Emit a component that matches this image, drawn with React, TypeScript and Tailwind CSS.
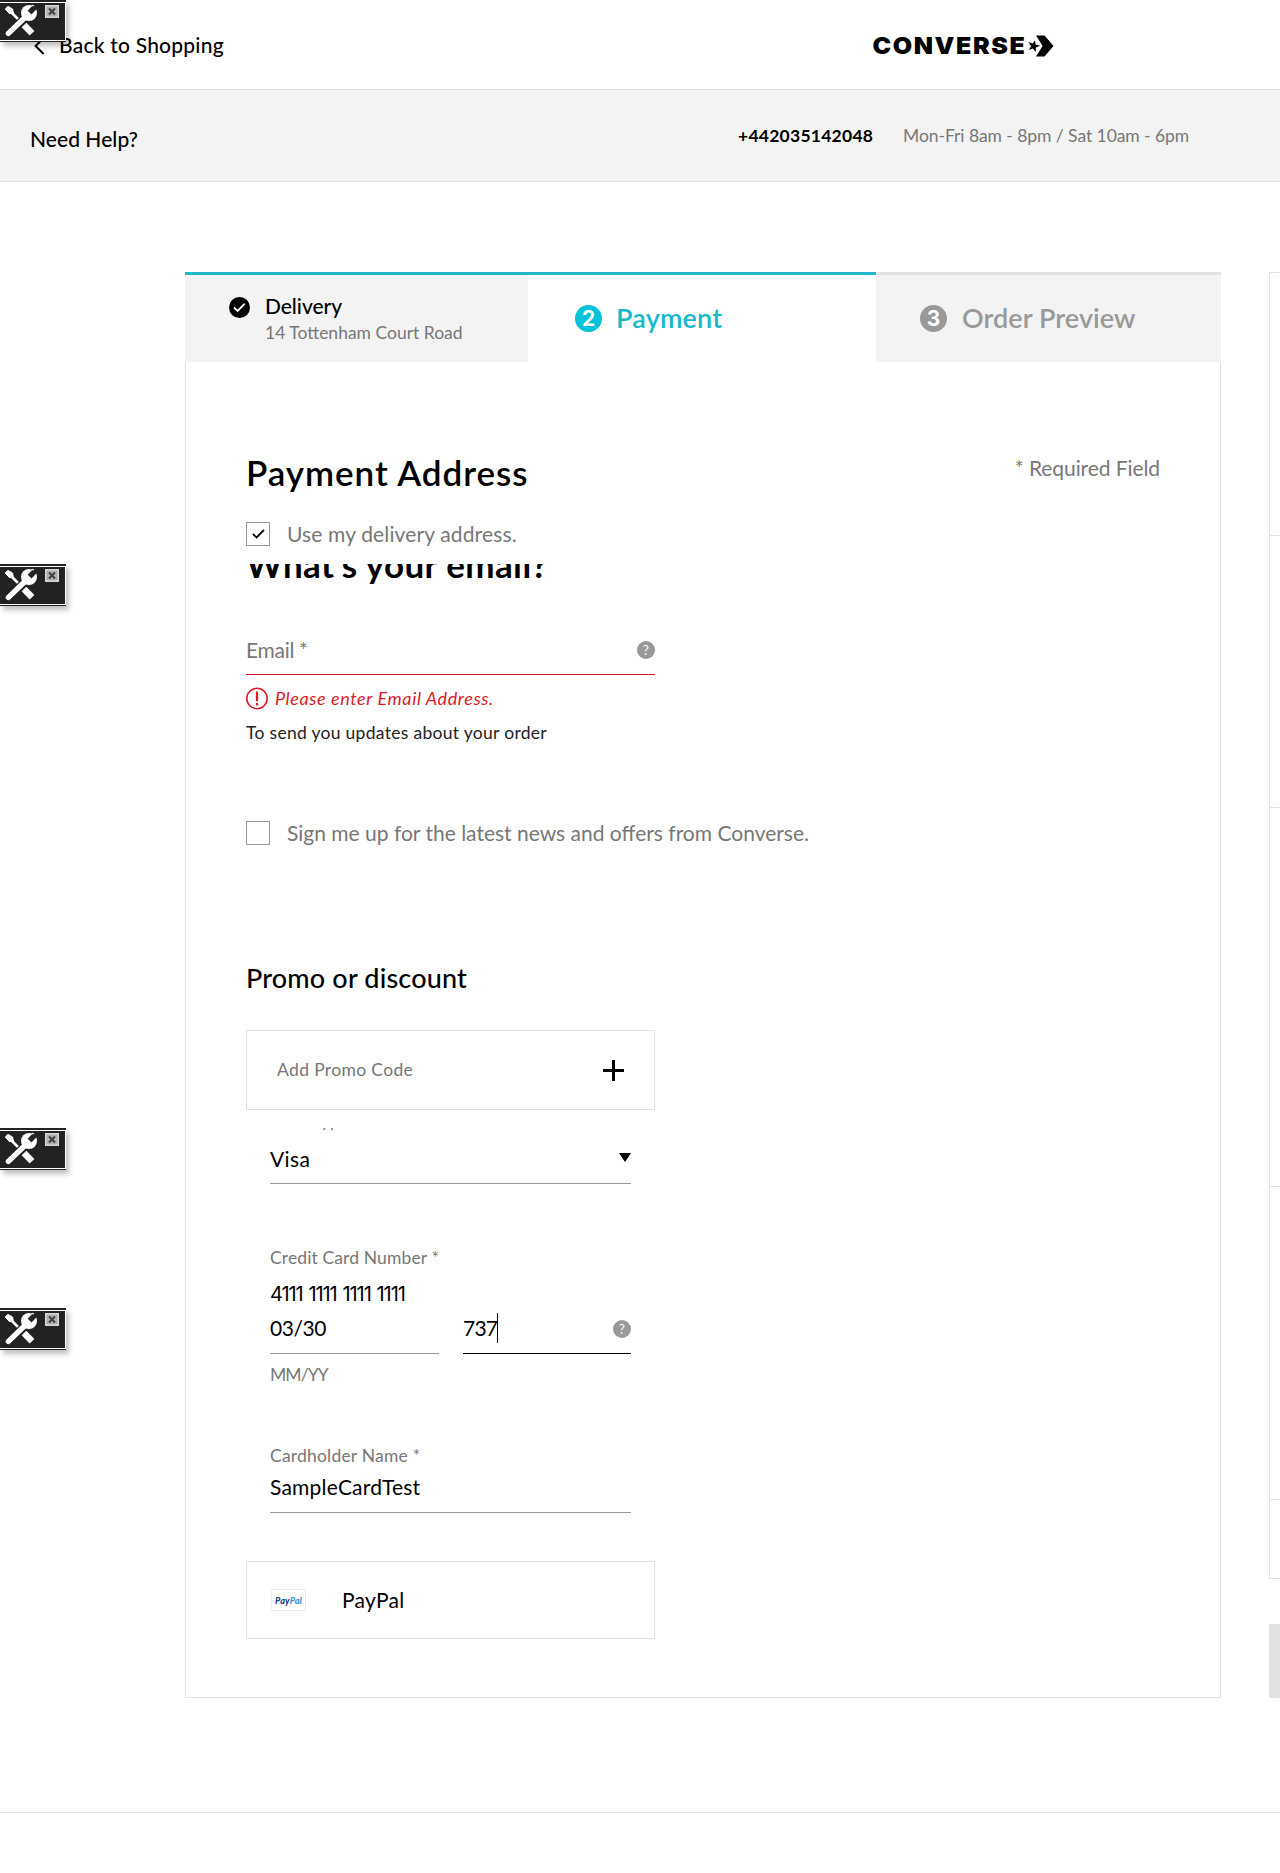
import React from "react";

function ToolBadge({ place }: { place: string }) {
  return (
    <div className={`absolute left-0 z-10 flex h-[42px] w-[66px] flex-col bg-white shadow-[3px_4px_5px_rgba(0,0,0,0.25)] ${place}`}>
      <div className="h-[2px] bg-[#222]" />
      <div className="mt-px mb-px mr-px flex-1 bg-[#222]">
        <svg width="65" height="37" viewBox="0 3 65 37" fill="none">
          <path d="M11 12 L23 24" stroke="#fff" strokeWidth="2.6" />
          <path d="M5.2 9 L8 6.4 L12.6 9 L13.4 13.4 L9.4 13.6 Z" fill="#fff" stroke="#fff" strokeLinejoin="round" />
          <path d="M24 25 L32 33.2" stroke="#fff" strokeWidth="6.6" />
          <path d="M26 16.5 L8.6 33.4" stroke="#222" strokeWidth="8" />
          <path d="M26.5 16 L8.4 33.4" stroke="#fff" strokeWidth="5.4" strokeLinecap="round" />
          <circle cx="29" cy="13" r="8" fill="#fff" />
          <path d="M29.6 12.6 L38.5 3.2" stroke="#222" strokeWidth="5.2" />
          <path d="M31.8 5.2 L34 6" stroke="#fff" strokeWidth="1.2" />
          <rect x="45" y="5" width="14" height="13" fill="#d6d6d6" />
          <rect x="47" y="7" width="10" height="9" fill="#b8b8b8" stroke="#999" strokeWidth="0.6" />
          <path d="M49 8.5 L55 14.5 M55 8.5 L49 14.5" stroke="#444" strokeWidth="2.2" />
        </svg>
      </div>
      <div className="h-px bg-[#222]" />
    </div>
  );
}

function Help() {
  return (
    <span className="flex h-[18px] w-[18px] items-center justify-center rounded-full bg-[#999] text-[13px] leading-none text-white">?</span>
  );
}

function Logo() {
  return (
    <svg width="182" height="36" viewBox="0 -6 182 36" className="block overflow-visible">
      <g transform="scale(1.06 1)">
        <text x="-0.4" y="19" textLength="143.6" lengthAdjust="spacing" fontFamily="Inter, sans-serif" fontWeight="900" fontSize="23.6">
          CONVERSE
        </text>
      </g>
      <path d="M163 0.5 H171.5 L180.5 11 L171.5 21.5 H163 L169.6 11 Z" />
      <path d="M155.5 7 L159.7 8.6 L162 5.2 L162.6 9.4 L167.2 10.8 L163 12.6 L162.6 17 L159.8 13.6 L156 15 L158 11.2 Z" />
    </svg>
  );
}

function StepNumber({ n, tone }: { n: string; tone: string }) {
  return (
    <span className={`flex h-[27px] w-[27px] items-center justify-center rounded-full font-['Inter'] text-[21px] leading-none font-bold text-white ${tone}`}>{n}</span>
  );
}

export default function App() {
  return (
    <div className="relative h-[1873px] w-[1280px] overflow-hidden bg-white font-['Lato',sans-serif] text-[21px] leading-6 text-black">
      <ToolBadge place="top-0" />
      <ToolBadge place="top-[564px]" />
      <ToolBadge place="top-[1128px]" />
      <ToolBadge place="top-[1308px]" />

      <header className="flex h-[90px] items-start border-b border-[#dedede]">
        <div className="mt-[33px] flex w-[873px] items-center pl-[34px]">
          <svg width="12" height="20" viewBox="0 0 12 20" fill="none" stroke="#000" strokeWidth="2" className="mr-[13px]">
            <path d="M9.6 3 L1.6 11 L9.6 19" />
          </svg>
          <span className="font-medium tracking-[0.22px] whitespace-nowrap">Back to Shopping</span>
        </div>
        <div className="mt-[29px]">
          <Logo />
        </div>
      </header>

      <section className="flex h-[92px] items-start border-b border-[#dedede] bg-[#f3f3f3]">
        <h2 className="mt-[37px] w-[738px] pl-[30px] font-medium tracking-[0.05px]">Need Help?</h2>
        <div className="mt-[36px] flex text-[17.5px] leading-5 whitespace-nowrap">
          <span className="w-[165px] font-bold tracking-[0.25px]">+442035142048</span>
          <span className="tracking-[-0.06px] text-[#777]">Mon-Fri 8am - 8pm / Sat 10am - 6pm</span>
        </div>
      </section>

      <div className="mt-[90px] flex items-start">
        <main className="ml-[185px] flex h-[1426px] w-[1036px] shrink-0 flex-col">
          <nav className="flex h-[90px] shrink-0">
            <div className="flex w-[343px] border-t-[3px] border-[#1eb8c8] bg-[#f3f3f3] pt-[22px] pl-[44px]">
              <svg width="21" height="21" viewBox="0 0 21 21" className="shrink-0">
                <circle cx="10.5" cy="10.5" r="10.5" />
                <path d="M5 10.5 L8.6 14 L15.8 6.6" fill="none" stroke="#fff" strokeWidth="1.8" />
              </svg>
              <div className="-mt-[3px] ml-[15px] whitespace-nowrap">
                <div className="font-medium tracking-[-0.05px]">Delivery</div>
                <div className="mt-[5px] text-[17.5px] leading-5 text-[#777]">14 Tottenham Court Road</div>
              </div>
            </div>
            <div className="flex w-[348px] border-t-[3px] border-[#1eb8c8] pt-[27px] pl-[47px] text-[27px] leading-8 font-semibold text-[#16b8cb]">
              <div className="mt-[3px]">
                <StepNumber n="2" tone="bg-[#00c3d9]" />
              </div>
              <span className="ml-[14px] tracking-[0.2px]">Payment</span>
            </div>
            <div className="flex w-[345px] border-t-[3px] border-[#e2e2e2] bg-[#f3f3f3] pt-[27px] pl-[44px] text-[27px] leading-8 font-semibold text-[#999]">
              <div className="mt-[3px]">
                <StepNumber n="3" tone="bg-[#999]" />
              </div>
              <span className="ml-[15px] tracking-[0.05px]">Order Preview</span>
            </div>
          </nav>

          <div className="flex flex-1 flex-col border-x border-b border-[#e2e2e2] pl-[60px] text-[#777]">
            <div className="mt-[90px] flex w-[914px] items-start justify-between">
              <h1 className="text-[35px] leading-10 font-semibold tracking-[0.95px] text-black">Payment Address</h1>
              <span className="mt-[4px] tracking-[-0.08px]">* Required Field</span>
            </div>

            <label className="mt-[30px] flex h-6 items-start">
              <span className="flex h-6 w-6 items-center justify-center border border-[#999]">
                <svg width="13" height="10" viewBox="0 0 13 10" fill="none" stroke="#000" strokeWidth="1.8">
                  <path d="M1 5 L4.5 8.5 L12 1" />
                </svg>
              </span>
              <span className="ml-[17px] tracking-[0.14px]">Use my delivery address.</span>
            </label>

            <div className="mt-[18px] h-7 overflow-hidden">
              <h1 className="-mt-[20px] text-[35px] leading-10 font-bold tracking-[0.4px] text-black">What's your email?</h1>
            </div>

            <div className="mt-[45px] flex h-[38px] w-[409px] items-start justify-between border-b border-[#d2202c]">
              <span className="mt-px tracking-[-0.3px]">Email *</span>
              <span className="mt-[4px]">
                <Help />
              </span>
            </div>
            <div className="mt-[12px] flex h-[23px] items-center text-[#dc1c2a]">
              <svg width="23" height="23" viewBox="0 0 23 23" fill="none" stroke="#dc1c2a">
                <circle cx="11" cy="11.5" r="10.2" strokeWidth="1.6" />
                <path d="M11 4.5 V14.3 M11 16 V18.4" strokeWidth="2.2" />
              </svg>
              <span className="mb-[2px] ml-[6px] text-[18px] leading-5 italic tracking-[0.6px]">Please enter Email Address.</span>
            </div>
            <p className="mt-[13px] text-[17.5px] leading-5 tracking-[0.3px] text-[#222]">To send you updates about your order</p>

            <label className="mt-[78px] flex h-6 items-start">
              <span className="h-6 w-6 border border-[#999]" />
              <span className="ml-[17px]">Sign me up for the latest news and offers from Converse.</span>
            </label>

            <h2 className="mt-[117px] text-[27px] leading-8 font-medium tracking-[0.17px] text-black">Promo or discount</h2>
            <div className="mt-[36px] flex h-[80px] w-[409px] items-center justify-between border border-[#e2e2e2] pr-[30px] pl-[30px]">
              <span className="text-[17.5px] leading-5 tracking-[0.35px]">Add Promo Code</span>
              <svg width="21" height="21" viewBox="0 0 21 21" stroke="#000" strokeWidth="3">
                <path d="M10.5 0 V21 M0 10.5 H21" />
              </svg>
            </div>

            <div className="ml-[24px] flex w-[361px] flex-col text-black">
              <div className="mt-[18px] h-1 overflow-hidden">
                <div className="-mt-[17px] text-[17.5px] leading-5 tracking-[0.3px] text-[#777]">Card Type *</div>
              </div>
              <div className="mt-[14px] flex h-[38px] items-start justify-between border-b border-[#999]">
                <span className="mt-px tracking-[0.4px]">Visa</span>
                <svg width="12" height="9" viewBox="0 0 12 9" className="mt-[7px]">
                  <path d="M0 0 H12 L6 9 Z" />
                </svg>
              </div>
              <div className="mt-[64px] text-[17.5px] leading-5 tracking-[0.12px] text-[#777]">Credit Card Number *</div>
              <div className="mt-[14px] font-['Inter'] text-[20px] tracking-[-1.1px] [word-spacing:1.4px]">4111 1111 1111 1111</div>
              <div className="mt-[10px] flex justify-between">
                <div className="h-[38px] w-[169px] border-b border-[#999] tracking-[-0.45px]">03/30</div>
                <div className="flex h-[38px] w-[168px] items-start border-b border-black">
                  <span className="tracking-[-0.8px]">737</span>
                  <span className="-mt-[3px] h-[30px] w-px bg-black" />
                  <span className="mt-[4px] ml-auto">
                    <Help />
                  </span>
                </div>
              </div>
              <div className="mt-[11px] text-[17.5px] leading-5 tracking-[-0.9px] text-[#777]">MM/YY</div>
              <div className="mt-[61px] text-[17.5px] leading-5 tracking-[0.2px] text-[#777]">Cardholder Name *</div>
              <div className="mt-[9px] h-[38px] border-b border-[#999] tracking-[0.2px]">SampleCardTest</div>
            </div>

            <div className="mt-[48px] flex h-[78px] w-[409px] items-center border border-[#e2e2e2] pl-[24px]">
              <span className="flex h-[22px] w-[35px] items-center justify-center rounded-[3px] border border-[#e6e9f5] text-[9px] leading-none font-black tracking-[0.1px] italic">
                <span className="text-[#253b80]">Pay</span>
                <span className="text-[#3d8fd0]">Pal</span>
              </span>
              <span className="ml-[36px] tracking-[0.3px] text-black">PayPal</span>
            </div>
          </div>
        </main>

        <aside className="ml-[48px] w-[160px] shrink-0">
          <div className="border-l border-[#e2e2e2]">
            <div className="h-[264px] border-y border-[#e2e2e2]" />
            <div className="h-[272px] border-b border-[#e2e2e2]" />
            <div className="h-[379px] border-b border-[#e2e2e2]" />
            <div className="h-[313px] border-b border-[#e2e2e2]" />
            <div className="h-[79px] border-b border-[#e2e2e2]" />
          </div>
          <div className="mt-[45px] h-[74px] bg-[#e2e2e2]" />
        </aside>
      </div>
      <footer className="mt-[114px] border-t border-[#e2e2e2]" />
    </div>
  );
}
